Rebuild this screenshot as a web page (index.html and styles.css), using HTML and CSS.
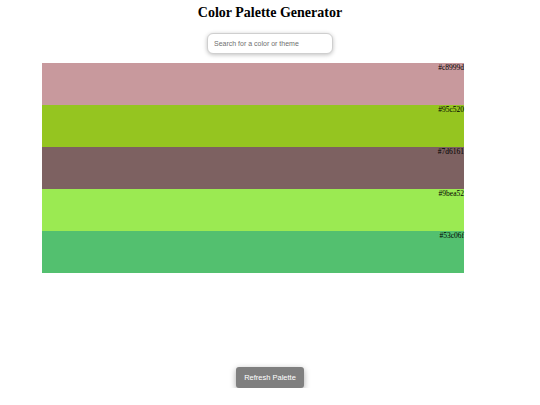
FILE: index.html
```html
<!DOCTYPE html>
<html>
<head>
<meta charset="utf-8">
<link rel="stylesheet" href="styles.css">
</head>
<body>
<h1 class="title">Color Palette Generator</h1>
<div class="search-row">
  <input class="search" type="text" placeholder="Search for a color or theme">
</div>
<div class="palette">
  <div class="swatch" style="background:#c8999d"><span class="code">#c8999d</span></div>
  <div class="swatch" style="background:#95c520"><span class="code">#95c520</span></div>
  <div class="swatch" style="background:#7d6161"><span class="code">#7d6161</span></div>
  <div class="swatch" style="background:#9bea52"><span class="code">#9bea52</span></div>
  <div class="swatch" style="background:#53c06f"><span class="code">#53c06f</span></div>
</div>
<div class="actions">
  <button class="refresh">Refresh Palette</button>
</div>
</body>
</html>
```
FILE: styles.css
```css
html, body {
  margin: 0;
  padding: 0;
  background: #ffffff;
}
body {
  font-family: "Liberation Serif", "Times New Roman", serif;
}
.title {
  margin: 0;
  padding-top: 4px;
  height: 29px;
  font-size: 14px;
  line-height: 17px;
  font-weight: bold;
  text-align: center;
  color: #000;
}
.search-row {
  display: flex;
  justify-content: center;
  height: 30px;
}
.search {
  box-sizing: border-box;
  width: 126px;
  height: 21px;
  padding: 0 6px;
  border: 1px solid #cfcfcf;
  border-radius: 6px;
  box-shadow: 0 1px 4px rgba(0, 0, 0, 0.25);
  font-family: "Liberation Sans", Arial, sans-serif;
  font-size: 7px;
  color: #333;
  outline: none;
}
.search::placeholder {
  color: #6f6f6f;
}
.palette {
  margin-left: 42px;
  width: 422px;
  display: flex;
  flex-direction: column;
}
.swatch {
  height: 42px;
  display: flex;
  justify-content: flex-end;
  align-items: flex-start;
}
.code {
  font-family: "Liberation Serif", "Times New Roman", serif;
  font-size: 7.5px;
  line-height: 9px;
  color: #000;
}
.actions {
  display: flex;
  justify-content: center;
  margin-top: 94px;
}
.refresh {
  width: 68px;
  height: 21px;
  border: none;
  border-radius: 3px;
  background: #7f7f7f;
  color: #ffffff;
  font-family: "Liberation Sans", Arial, sans-serif;
  font-size: 7.5px;
  box-shadow: 0 2px 6px rgba(0, 0, 0, 0.35);
  padding: 0;
}
```
